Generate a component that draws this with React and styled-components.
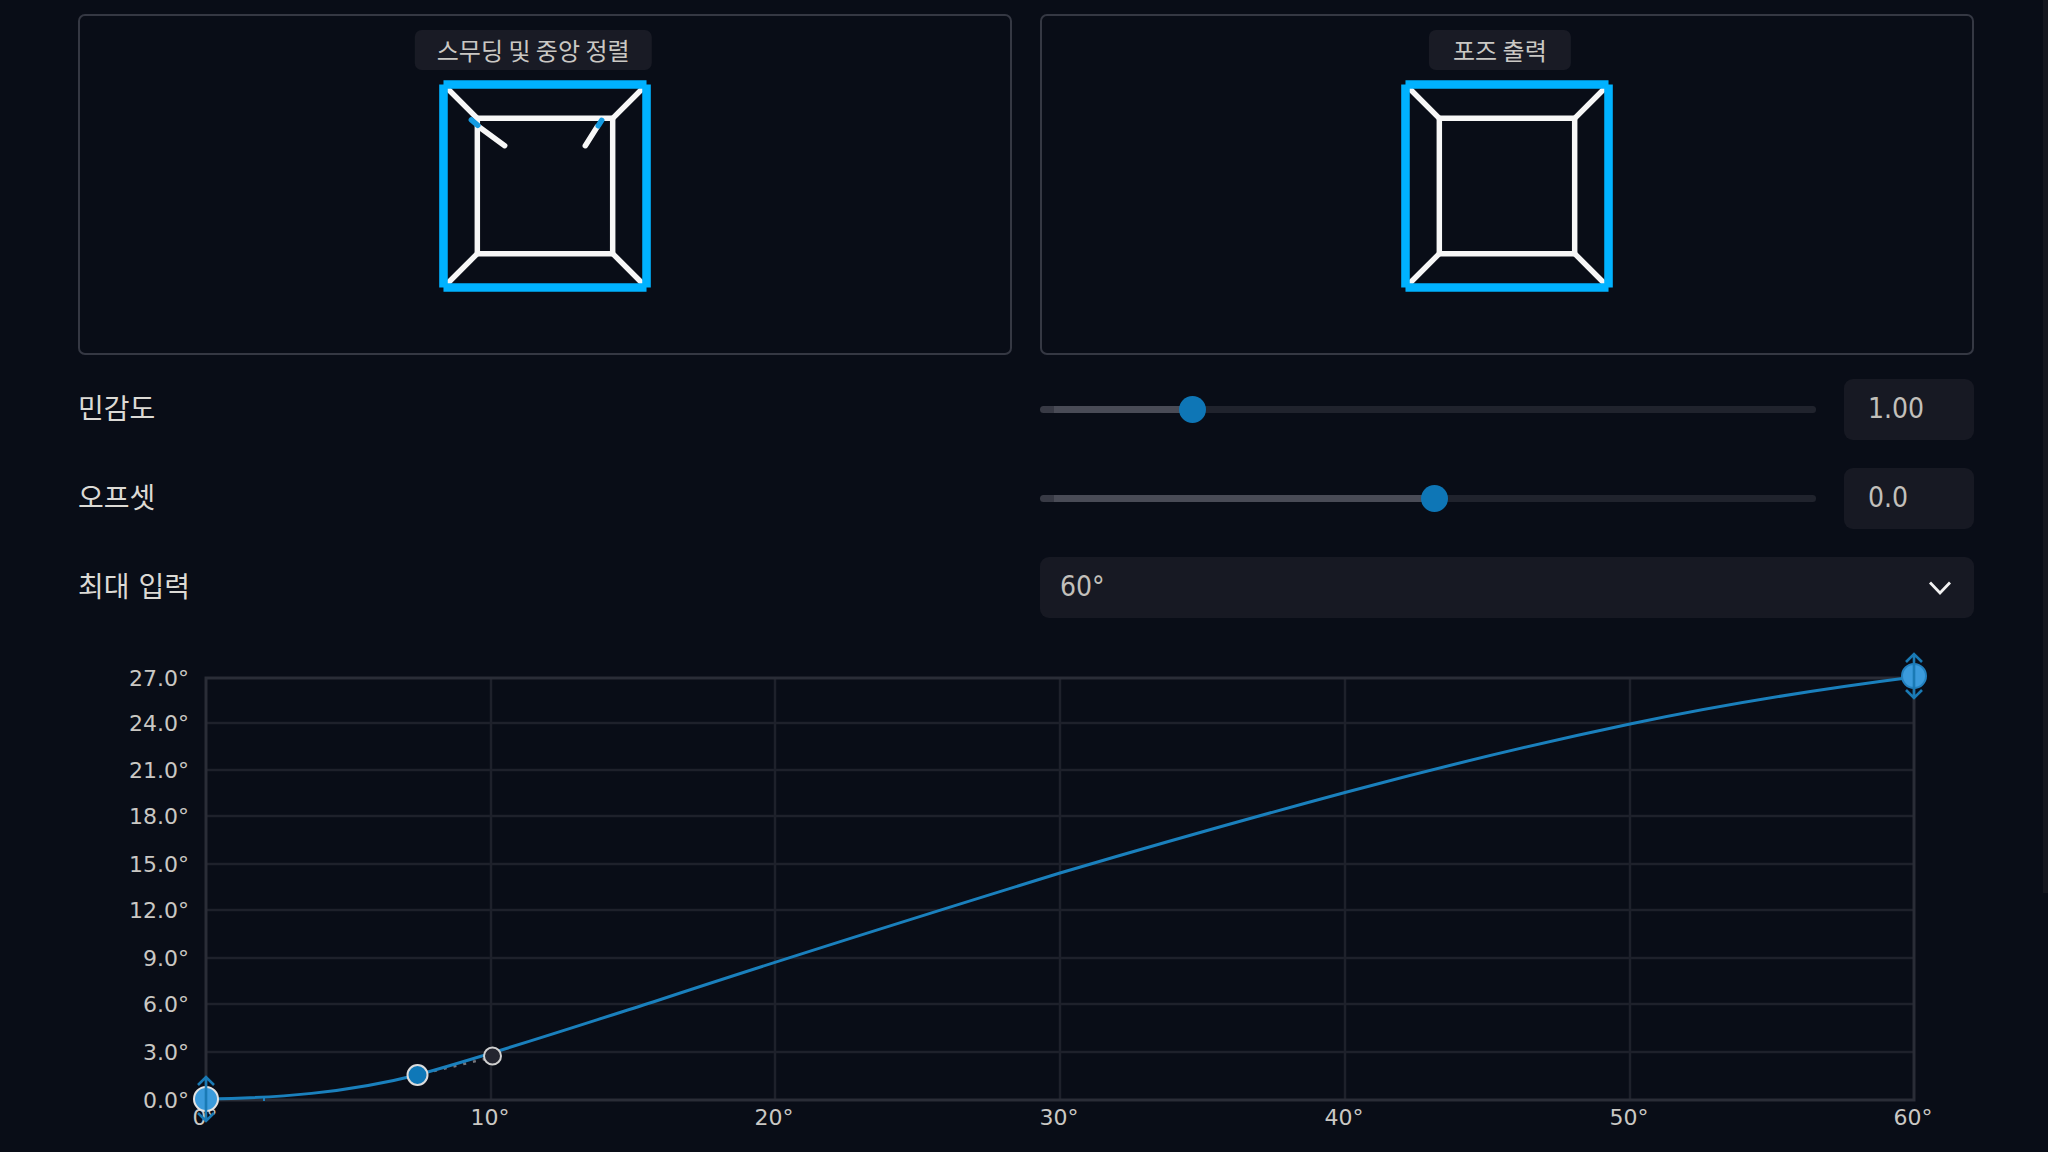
import React, { useState } from 'react';
import styled, { createGlobalStyle } from 'styled-components';

const GlobalStyle = createGlobalStyle`
  * {
    box-sizing: border-box;
  }

  body {
    margin: 0;
    background: #090d17;
    color: #dcdad5;
    font-family: 'DejaVu Sans Condensed', 'Noto Sans CJK KR', sans-serif;
    font-size: 28px;
  }
`;

const Page = styled.div`
  display: flex;
  align-items: flex-start;
`;

const Content = styled.main`
  flex: 1;
  padding: 14px 69px 0 78px;
`;

const ScrollThumb = styled.div`
  width: 5px;
  height: 893px;
  background: #15171f;
`;

const Previews = styled.div`
  display: grid;
  grid-template-columns: 1fr 1fr;
  gap: 28px;
  margin-bottom: 24px;
`;

const Preview = styled.section`
  position: relative;
  display: flex;
  justify-content: center;
  height: 341px;
  padding-top: 64px;
  border: 2px solid #353843;
  border-radius: 7px;
`;

const Badge = styled.h2`
  position: absolute;
  top: 14px;
  left: 50%;
  transform: translateX(-55%);
  min-width: 142px;
  margin: 0;
  padding: 0 22px;
  border-radius: 7px;
  background: #191b25;
  color: #cac8c4;
  font-family: 'Noto Sans CJK KR', sans-serif;
  font-size: 24px;
  font-weight: 400;
  line-height: 40px;
  text-align: center;
  white-space: nowrap;
`;

const Figure = styled.svg`
  width: 212px;
  height: 212px;
`;

const Settings = styled.div`
  display: grid;
  gap: 28px;
`;

const Row = styled.div`
  display: grid;
  grid-template-columns: 1fr 1fr;
  align-items: center;
  column-gap: 28px;
  height: 61px;
`;

const Label = styled.label`
  font-family: 'DejaVu Sans', 'Noto Sans CJK KR', sans-serif;
  font-size: 28px;
  line-height: 40px;
`;

const Control = styled.div`
  position: relative;
  display: flex;
  align-items: center;
  gap: 28px;
`;

const Slider = styled.input`
  flex: 1;
  min-width: 0;
  height: 27px;
  margin: 0;
  appearance: none;
  background: transparent;

  &::-webkit-slider-runnable-track {
    height: 7px;
    border-radius: 4px;
    background: linear-gradient(
      to right,
      #383a45 14px,
      #494b56 14px,
      #494b56 var(--fill),
      #20232d var(--fill)
    );
  }

  &::-webkit-slider-thumb {
    width: 27px;
    height: 27px;
    margin-top: -10px;
    appearance: none;
    border-radius: 50%;
    background: #0e76b6;
  }
`;

const ValueInput = styled.input`
  width: 130px;
  height: 61px;
  padding: 0 0 2px 24px;
  border: none;
  border-radius: 9px;
  background: #171923;
  color: #c2c0bb;
  font: inherit;
`;

const Select = styled.select`
  width: 100%;
  height: 61px;
  padding: 0 60px 2px 20px;
  appearance: none;
  border: none;
  border-radius: 9px;
  background: #171923;
  color: #c2c0bb;
  font: inherit;
`;

const Chevron = styled.svg`
  position: absolute;
  right: 22px;
  width: 24px;
  height: 16px;
  pointer-events: none;
`;

const Chart = styled.svg`
  display: block;
  width: 100%;
  height: auto;

  text {
    fill: #cac8c4;
    font-family: 'DejaVu Sans', sans-serif;
    font-size: 22px;
  }
`;

const yTicks = [
  { label: '27.0°', y: 60 },
  { label: '24.0°', y: 105 },
  { label: '21.0°', y: 152 },
  { label: '18.0°', y: 198 },
  { label: '15.0°', y: 246 },
  { label: '12.0°', y: 292 },
  { label: '9.0°', y: 340 },
  { label: '6.0°', y: 386 },
  { label: '3.0°', y: 434 },
  { label: '0.0°', y: 482 },
];

const xTicks = [
  { label: '0°', x: 127 },
  { label: '10°', x: 412 },
  { label: '20°', x: 696 },
  { label: '30°', x: 981 },
  { label: '40°', x: 1266 },
  { label: '50°', x: 1551 },
  { label: '60°', x: 1835 },
];

const Frame = ({ hands }) => (
  <Figure viewBox="0 0 213 213" fill="none" aria-hidden="true">
    <g stroke="#f7f7f7" strokeWidth="5.5">
      <path d="M38.5 38.5H174.5V174.5H38.5Z" strokeLinejoin="round" />
      <path d="M8 8L38.5 38.5M205 8L174.5 38.5M205 205L174.5 174.5M8 205L38.5 174.5" />
      {hands && <path d="M40 47L66 66M159 47L147 66" strokeLinecap="round" />}
    </g>
    {hands && (
      <path d="M32.5 40L39 45.5M163.5 40.5L160 46" stroke="#149be2" strokeWidth="5.5" strokeLinecap="round" />
    )}
    <path
      d="M4.5 4.5H208.5M4.5 208.5H208.5M4.5 4.5V208.5M208.5 4.5V208.5"
      stroke="#00b2ff"
      strokeWidth="8.6"
    />
  </Figure>
);

const DragHandle = ({ x, y, ring, r }) => (
  <g transform={`translate(${x} ${y})`}>
    <circle r={r} fill="#3b9bdc" stroke={ring} strokeWidth="2" />
    <path
      d="M0 -22V22M-8 -14L0 -22L8 -14M-8 14L0 22L8 14"
      fill="none"
      stroke="#1a7ab5"
      strokeWidth="2.6"
    />
  </g>
);

const SliderRow = ({ id, label, min, max, initial, digits }) => {
  const [value, setValue] = useState(initial);
  const percent = ((value - min) / (max - min)) * 100;

  return (
    <Row>
      <Label htmlFor={id}>{label}</Label>
      <Control>
        <Slider
          id={id}
          type="range"
          min={min}
          max={max}
          step="any"
          value={value}
          onChange={(e) => setValue(Number(e.target.value))}
          style={{ '--fill': `${percent}%` }}
        />
        <ValueInput type="text" aria-label={label} value={value.toFixed(digits)} readOnly />
      </Control>
    </Row>
  );
};

const CurveChart = () => (
  <Chart viewBox="-1 0 1896 530" role="img">
    <g stroke="#1e212b" strokeWidth="2.5">
      {yTicks.slice(1, -1).map((tick) => (
        <line key={tick.label} x1="127" x2="1835" y1={tick.y} y2={tick.y} />
      ))}
      {xTicks.slice(1, -1).map((tick) => (
        <line key={tick.label} x1={tick.x} x2={tick.x} y1="60" y2="482" />
      ))}
    </g>
    <rect x="127" y="60" width="1708" height="422" fill="none" stroke="#2a2d37" strokeWidth="3" />
    {yTicks.map((tick) => (
      <text key={tick.label} x="110" y={tick.y + 8} textAnchor="end">{tick.label}</text>
    ))}
    {xTicks.map((tick) => (
      <text key={tick.label} x={tick.x - 1} y="507" textAnchor="middle">{tick.label}</text>
    ))}
    <path d="M355 453L406 441" stroke="#74757c" strokeWidth="2.5" strokeDasharray="3 7" />
    <path
      d="M127 481C197 480 268 475 338 457C417 435 495 409 574 384C710 339 845 297 981 255C1076 227 1171 200 1266 174.5C1361 149 1456 126 1551 106C1646 86 1741 71 1835 59"
      fill="none"
      stroke="#1a80bd"
      strokeWidth="3"
    />
    <path d="M185 479V483" stroke="#1a80bd" strokeWidth="2" />
    <circle cx="338.5" cy="457" r="10" fill="#0f78b8" stroke="#dcdcdc" strokeWidth="2" />
    <circle cx="413.5" cy="438" r="8.5" fill="#242530" stroke="#cfcfcf" strokeWidth="2" />
    <DragHandle x={127} y={481} r={12} ring="#e4e4e4" />
    <DragHandle x={1835} y={58} r={12} ring="#2381c0" />
  </Chart>
);

const App = () => {
  const [maxInput, setMaxInput] = useState('60');

  return (
    <Page>
      <GlobalStyle />
      <Content>
        <Previews>
          <Preview>
            <Badge>스무딩 및 중앙 정렬</Badge>
            <Frame hands />
          </Preview>
          <Preview>
            <Badge>포즈 출력</Badge>
            <Frame />
          </Preview>
        </Previews>

        <Settings>
          <SliderRow id="sensitivity" label="민감도" min={0.2} max={4.5} initial={1} digits={2} />
          <SliderRow id="offset" label="오프셋" min={-31} max={30} initial={0} digits={1} />
          <Row>
            <Label htmlFor="max-input">최대 입력</Label>
            <Control>
              <Select id="max-input" value={maxInput} onChange={(e) => setMaxInput(e.target.value)}>
                <option value="60">60°</option>
              </Select>
              <Chevron viewBox="0 0 24 16" fill="none">
                <path d="M2 2.5L12 13L22 2.5" stroke="#f2f2f2" strokeWidth="2.8" />
              </Chevron>
            </Control>
          </Row>
        </Settings>

        <CurveChart />
      </Content>
      <ScrollThumb />
    </Page>
  );
};

export default App;
